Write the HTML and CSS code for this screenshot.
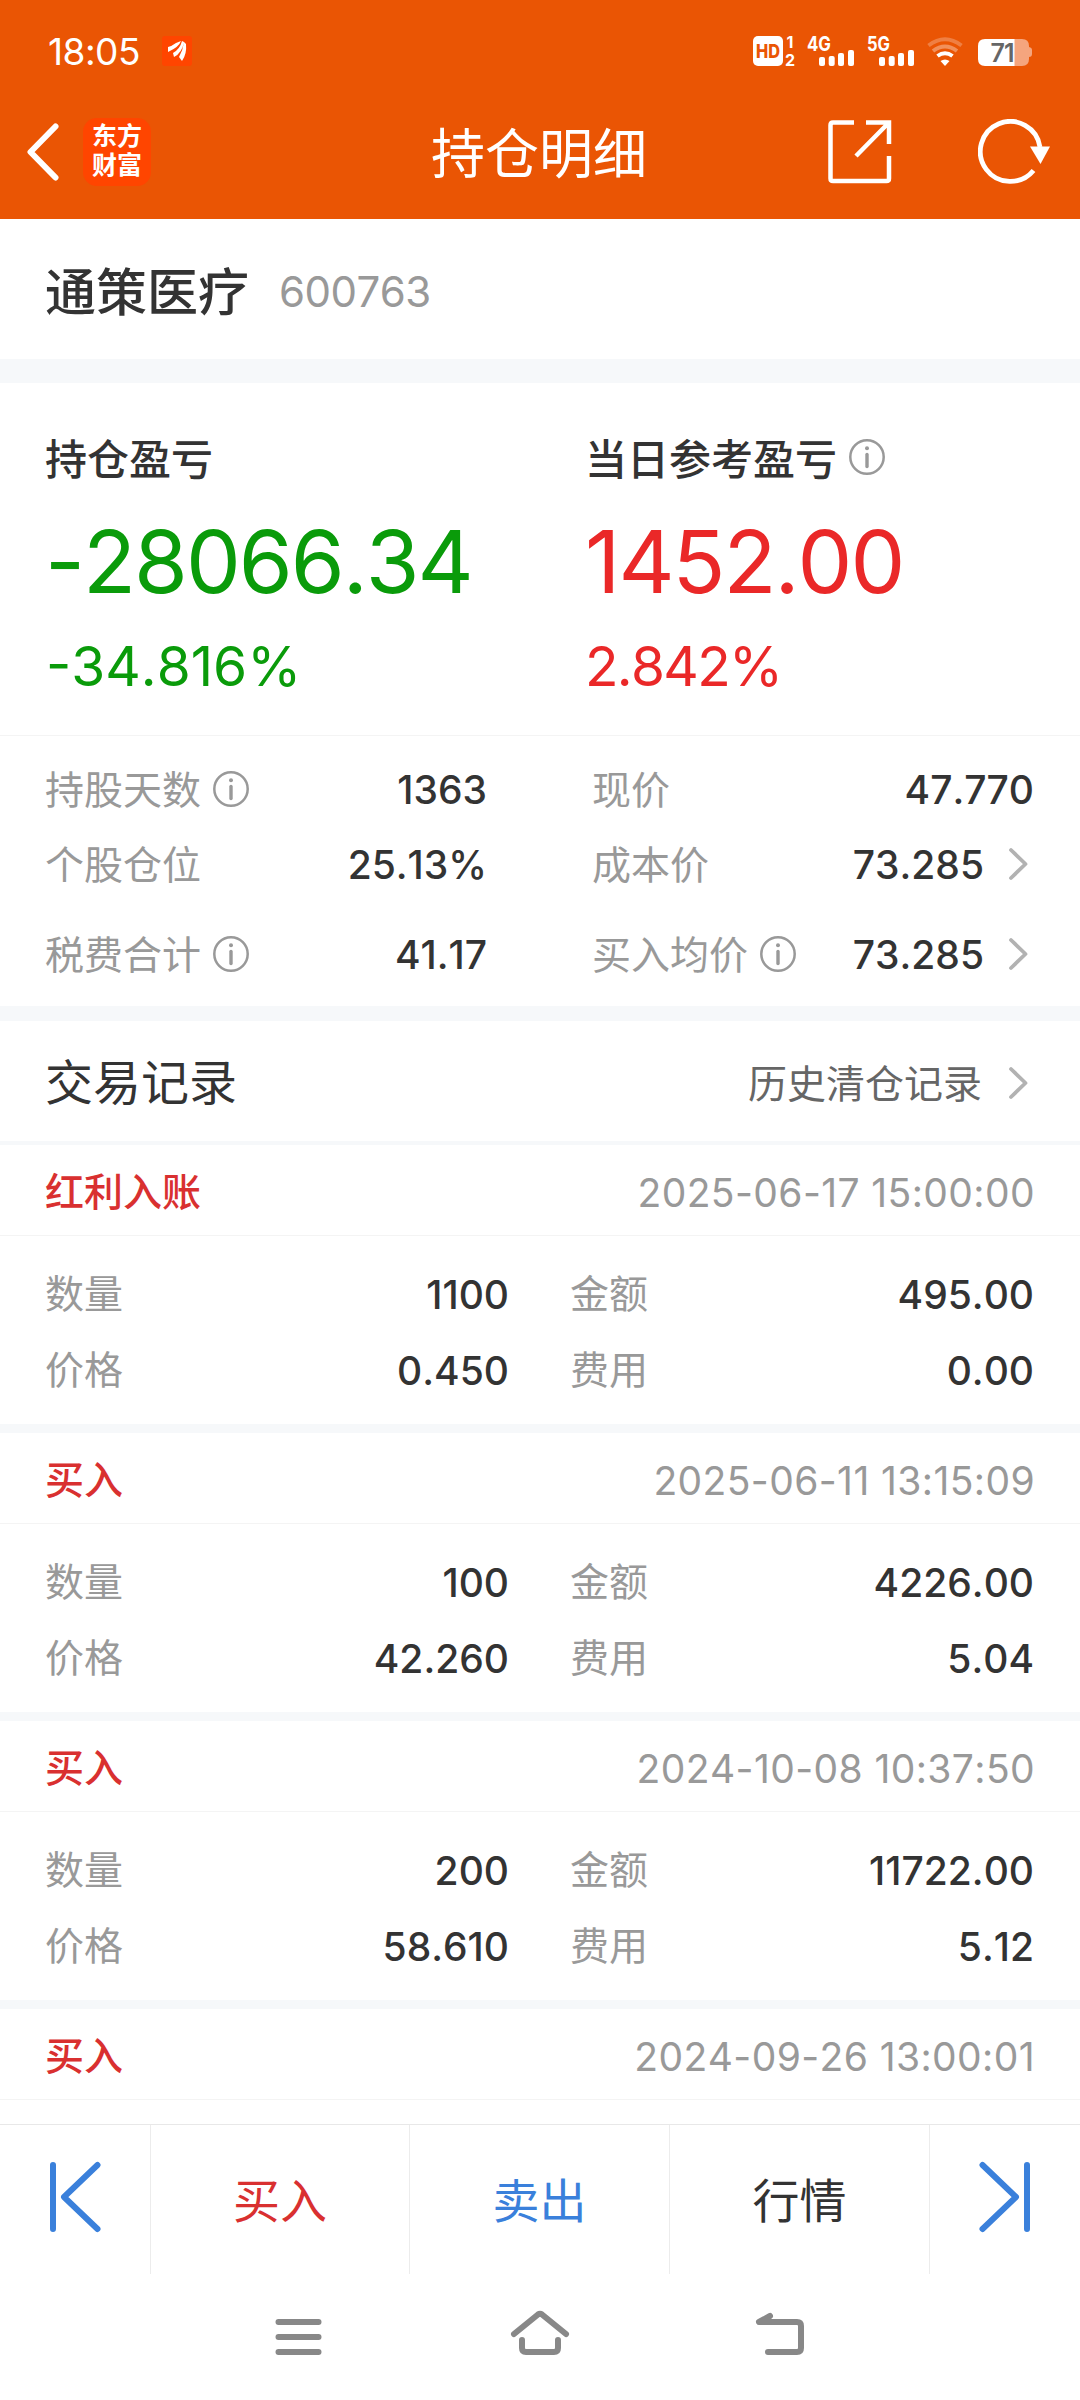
FILE: index.html
```html
<!DOCTYPE html>
<html lang="zh-CN">
  <head>
    <meta charset="utf-8">
    <title>持仓明细</title>
    <link rel="stylesheet" href="styles.css">
  </head>
  <body>

    <!-- shared icons -->
    <svg class="defs" width="0" height="0">
      <symbol id="info" viewBox="0 0 36 36">
        <circle cx="18" cy="18" r="16.7" fill="none" stroke="#999" stroke-width="2.5"/>
        <circle cx="18" cy="9.3" r="2" fill="#999"/>
        <path d="M18 15.5v12" stroke="#999" stroke-width="3.4" stroke-linecap="round"/>
      </symbol>
      <symbol id="chevron" viewBox="0 0 20 34">
        <path d="M3 3l14.500 14L3 31" fill="none" stroke="#b2b2b2" stroke-width="3.800" stroke-linecap="round" stroke-linejoin="round"/>
      </symbol>
    </svg>

    <header class="header">
      <div class="status-bar">
        <span class="clock">18:05</span>
        <svg class="notify" width="30" height="30" viewBox="0 0 30 30">
          <rect width="30" height="30" rx="3" fill="#ff4500"/>
          <path d="M6 11Q10 10 14 7L19 5Q17 11 6 16ZM11 17Q18 13 20 5L22 6Q20 17 12 21ZM17 21Q21 14 22 6L24 8Q25 18 20 25Z" fill="#fff"/>
        </svg>
        <svg class="signals" width="282" height="36" viewBox="0 0 282 36">
          <!-- HD -->
          <rect x="3" y="3" width="30" height="30" rx="5" fill="#fff"/>
          <text class="t-hd" x="18" y="25" text-anchor="middle" textLength="24" lengthAdjust="spacingAndGlyphs">HD</text>
          <text class="t-sim" x="40" y="15" text-anchor="middle">1</text>
          <text class="t-sim" x="40" y="33" text-anchor="middle">2</text>
          <!-- 4G / 5G -->
          <text class="t-net" x="57" y="18" textLength="24" lengthAdjust="spacingAndGlyphs">4G</text>
          <g fill="#fff">
            <rect x="69" y="24" width="6" height="9" rx="2"/>
            <rect x="78.700" y="23" width="6" height="10" rx="2"/>
            <rect x="88" y="20" width="6" height="13" rx="2"/>
            <rect x="98" y="17" width="6" height="16" rx="2"/>
          </g>
          <text class="t-net" x="117" y="18" textLength="23" lengthAdjust="spacingAndGlyphs">5G</text>
          <g fill="#fff">
            <rect x="129" y="24" width="6" height="9" rx="2"/>
            <rect x="138.700" y="23" width="6" height="10" rx="2"/>
            <rect x="148" y="20" width="6" height="13" rx="2"/>
            <rect x="158" y="17" width="6" height="16" rx="2"/>
          </g>
          <!-- wifi -->
          <g fill="none" stroke="#fff" stroke-width="4">
            <path d="M178.500 12.500Q195 0 211.500 12.500" opacity=".25"/>
            <path d="M183 18Q195 9 207 18" opacity=".35"/>
            <path d="M187.500 23Q195 17.500 202.500 23"/>
          </g>
          <path d="M190.500 28Q195 25 199.500 28L195 33Z" fill="#fff"/>
          <!-- battery -->
          <path d="M264 6h8q7 0 7 7v1q3 .5 3 3v4q0 3-3 3v2q0 7-7 7h-8z" fill="#f5a57e"/>
          <path d="M235 6h29.500v27H235q-7 0-7-7V13q0-7 7-7z" fill="#fff"/>
          <text class="t-bat" x="240.500" y="28.500" textLength="24">71</text>
        </svg>
      </div>

      <div class="nav-bar">
        <div class="nav-left">
          <svg width="34" height="58" viewBox="0 0 34 58">
            <path d="M29.500 3.500L4.500 29L29.500 54.500" fill="none" stroke="#fff" stroke-width="6" stroke-linecap="round" stroke-linejoin="round"/>
          </svg>
          <div class="brand"><span>东方</span><span>财富</span></div>
        </div>
        <h1 class="nav-title">持仓明细</h1>
        <div class="nav-right">
          <svg width="64" height="64" viewBox="0 0 64 64" fill="none" stroke="#fff" stroke-width="4.500">
            <path d="M26 2.500H5Q2.500 2.500 2.500 5V58.500Q2.500 61 5 61H58.500Q61 61 61 58.500V36"/>
            <path d="M38 2.500H61V24M28 36L60 3.500"/>
          </svg>
          <svg width="74" height="66" viewBox="0 2 74 66">
            <path d="M55.500 53.500A30 30 0 1 1 62 30" fill="none" stroke="#fff" stroke-width="4.800"/>
            <path d="M52 29.500H72L62.500 47Z" fill="#fff"/>
          </svg>
        </div>
      </div>
    </header>

    <section class="stock">
      <span class="stock-name">通策医疗</span>
      <span class="stock-code">600763</span>
    </section>

    <section class="profit">
      <div class="profit-col down">
        <div class="profit-label">持仓盈亏</div>
        <div class="profit-value">-28066.34</div>
        <div class="profit-rate">-34.816%</div>
      </div>
      <div class="profit-col up">
        <div class="profit-label">当日参考盈亏<svg class="info"><use href="#info"/></svg></div>
        <div class="profit-value">1452.00</div>
        <div class="profit-rate">2.842%</div>
      </div>
    </section>

    <section class="detail">
      <div class="cell"><span>持股天数</span><svg class="info"><use href="#info"/></svg><b>1363</b></div>
      <div class="cell"><span>现价</span><b>47.770</b></div>
      <div class="cell"><span>个股仓位</span><b>25.13%</b></div>
      <div class="cell"><span>成本价</span><b>73.285</b><svg class="chevron"><use href="#chevron"/></svg></div>
      <div class="cell"><span>税费合计</span><svg class="info"><use href="#info"/></svg><b>41.17</b></div>
      <div class="cell"><span>买入均价</span><svg class="info"><use href="#info"/></svg><b>73.285</b><svg class="chevron"><use href="#chevron"/></svg></div>
    </section>

    <section class="record-title">
      <h2>交易记录</h2>
      <span class="history">历史清仓记录</span>
      <svg class="chevron"><use href="#chevron"/></svg>
    </section>

    <main class="records">
      <article class="record">
        <div class="record-head"><b>红利入账</b><time>2025-06-17 15:00:00</time></div>
        <div class="record-body">
          <div class="cell"><span>数量</span><b>1100</b></div>
          <div class="cell"><span>金额</span><b>495.00</b></div>
          <div class="cell"><span>价格</span><b>0.450</b></div>
          <div class="cell"><span>费用</span><b>0.00</b></div>
        </div>
      </article>
      <article class="record">
        <div class="record-head"><b>买入</b><time>2025-06-11 13:15:09</time></div>
        <div class="record-body">
          <div class="cell"><span>数量</span><b>100</b></div>
          <div class="cell"><span>金额</span><b>4226.00</b></div>
          <div class="cell"><span>价格</span><b>42.260</b></div>
          <div class="cell"><span>费用</span><b>5.04</b></div>
        </div>
      </article>
      <article class="record">
        <div class="record-head"><b>买入</b><time>2024-10-08 10:37:50</time></div>
        <div class="record-body">
          <div class="cell"><span>数量</span><b>200</b></div>
          <div class="cell"><span>金额</span><b>11722.00</b></div>
          <div class="cell"><span>价格</span><b>58.610</b></div>
          <div class="cell"><span>费用</span><b>5.12</b></div>
        </div>
      </article>
      <article class="record">
        <div class="record-head"><b>买入</b><time>2024-09-26 13:00:01</time></div>
      </article>
    </main>

    <footer class="tabs">
      <div class="tab">
        <svg width="52" height="72" viewBox="0 0 52 72" fill="none" stroke="#3a80db" stroke-width="6" stroke-linecap="round">
          <path d="M4 4V68M48.500 4L15 36L48.500 68" stroke-linejoin="round"/>
        </svg>
      </div>
      <div class="tab buy">买入</div>
      <div class="tab sell">卖出</div>
      <div class="tab">行情</div>
      <div class="tab">
        <svg width="52" height="72" viewBox="0 0 52 72" fill="none" stroke="#3a80db" stroke-width="6" stroke-linecap="round">
          <path d="M48 4V68M3.500 4L37 36L3.500 68" stroke-linejoin="round"/>
        </svg>
      </div>
    </footer>

    <!-- system navigation -->
    <nav class="system-nav">
      <svg width="60" height="50" viewBox="0 0 60 50"><path d="M8.500 13H48.500M8.500 28H48.500M8.500 43H48.500"/></svg>
      <svg width="60" height="50" viewBox="0 0 60 50"><path d="M4 25L28 5.500Q30 4 32 5.500L56 25M12 31V39Q12 43 16 43H44Q48 43 48 39V31"/></svg>
      <svg width="60" height="50" viewBox="0 0 60 50"><path d="M20 7L9 13H47Q51 13 51 17V39Q51 43 47 43H18"/></svg>
    </nav>

  </body>
</html>
```
FILE: styles.css
```css
* { box-sizing: border-box; }
body, h1, h2 { margin: 0; font-weight: 400; }

body {
  display: flex;
  flex-direction: column;
  width: 1080px;
  height: 2400px;
  overflow: hidden;
  background: #fff;
  color: #333;
  font-family: Inter, "Noto Sans CJK SC", sans-serif;
  font-size: 39px;
  line-height: 1;
  font-kerning: none;
}

svg { flex: none; display: block; }
.defs { position: absolute; }
.info { width: 36px; height: 36px; margin-bottom: 2px; }
.chevron { width: 20px; height: 34px; margin-bottom: 2px; }

/* Header */
.header {
  height: 219px;
  flex: none;
  background: #ea5504;
  color: #fff;
}
.status-bar {
  display: flex;
  align-items: center;
  height: 102px;
  padding: 0 48px;
}
.clock {
  width: 114px;
  font-size: 37px;
  letter-spacing: -0.5px;
}
.signals { margin-left: auto; }
.t-hd { font-size: 19px; font-weight: 800; fill: #ea5504; }
.t-sim { font-size: 16px; font-weight: 700; fill: #fff; }
.t-net { font-size: 20px; font-weight: 700; fill: #fff; }
.t-bat { font-size: 25px; font-weight: 600; fill: #666; }

.nav-bar {
  display: grid;
  grid-template-columns: 1fr auto 1fr;
  align-items: center;
  height: 99px;
  padding: 0 28px 0 26px;
}
.nav-left { display: flex; align-items: center; gap: 23px; }
.brand {
  display: flex;
  flex-direction: column;
  align-items: center;
  justify-content: center;
  gap: 4px;
  width: 68px;
  height: 68px;
  padding-bottom: 2px;
  border-radius: 14px;
  background: #ff4500;
  font-size: 25px;
  font-weight: 700;
}
.nav-title { padding-top: 7px; font-size: 54px; }
.nav-right {
  display: flex;
  align-items: center;
  justify-content: flex-end;
  gap: 86px;
}

/* Stock name */
.stock {
  display: flex;
  align-items: center;
  gap: 30px;
  height: 164px;
  flex: none;
  padding: 5px 45px 0;
  border-bottom: 24px solid #f6f8fa;
}
.stock-name { padding-top: 1px; font-size: 51px; font-weight: 500; }
.stock-code { font-size: 42px; color: #999; letter-spacing: -0.5px; }

/* Profit */
.profit {
  display: flex;
  height: 353px;
  flex: none;
  border-bottom: 1px solid #f4f4f4;
}
.profit-col { width: 540px; padding: 55px 0 0 45px; }
.profit-label {
  display: flex;
  align-items: center;
  gap: 12px;
  height: 42px;
  padding-top: 1px;
  font-size: 42px;
  font-weight: 500;
}
.profit-label .info { margin-bottom: 6px; }
.profit-value { margin-top: 38px; font-size: 87px; letter-spacing: -2px; }
.profit-rate { margin-top: 34px; font-size: 55px; letter-spacing: -1.7px; }
.down .profit-value, .down .profit-rate { color: #0a9b0a; }
.up .profit-value, .up .profit-rate { color: #ea2828; }
.down .profit-rate { padding-left: 1px; letter-spacing: 0; }

/* label + value */
.cell { display: flex; align-items: center; color: #999; }
.cell > span { margin-bottom: 1px; }
.cell .info { margin-left: 12px; }
.cell b {
  margin-left: auto;
  color: #333;
  font-weight: 500;
}
.cell .chevron { margin: 0 6px 2px 24px; }

.detail {
  display: grid;
  grid-template-columns: 442px 442px;
  grid-template-rows: 75px 75px 105px;
  column-gap: 105px;
  height: 285px;
  flex: none;
  padding: 16px 46px 0 45px;
  border-bottom: 15px solid #f6f8fa;
}

.record-title {
  display: flex;
  align-items: center;
  height: 124px;
  flex: none;
  padding: 3px 52px 0 45px;
  border-bottom: 4px solid #f6f8fa;
}
.record-title h2 { font-size: 48px; }
.history { margin-left: auto; padding-top: 2px; color: #666; }
.record-title .chevron { margin-left: 26px; margin-bottom: 0; }

/* Records */
.records { height: 979px; flex: none; overflow: hidden; }
.record { border-bottom: 9px solid #f6f8fa; }
.record-head {
  display: flex;
  align-items: center;
  justify-content: space-between;
  height: 91px;
  padding: 4px 46px 0 45px;
  border-bottom: 1px solid #f4f4f4;
}
.record-head b { margin-bottom: 2px; color: #d93030; font-weight: 500; }
.record-head time { margin-right: -1px; color: #999; letter-spacing: 0.4px; }
.record-body {
  display: grid;
  grid-template-columns: 464px 464px;
  grid-template-rows: 76px 76px;
  column-gap: 61px;
  height: 188px;
  padding: 20px 46px 0 45px;
}
.record:last-child { border-bottom: 0; }

/* Bottom tabs */
.tabs {
  display: grid;
  grid-template-columns: 151px 259px 260px 260px 150px;
  height: 150px;
  flex: none;
  border-top: 1px solid #e8e8e8;
  font-size: 47px;
}
.tab {
  display: flex;
  align-items: center;
  justify-content: center;
  padding-top: 2px;
  border-right: 1px solid #ececec;
}
.tab svg { margin-bottom: 7px; }
.tab:last-child { border-right: 0; }
.buy { color: #d93030; }
.sell { color: #3a80db; }

.system-nav {
  display: flex;
  justify-content: center;
  gap: 180px;
  padding-top: 35px;
}
.system-nav path {
  fill: none;
  stroke: #888;
  stroke-width: 6;
  stroke-linecap: round;
  stroke-linejoin: round;
}
```
